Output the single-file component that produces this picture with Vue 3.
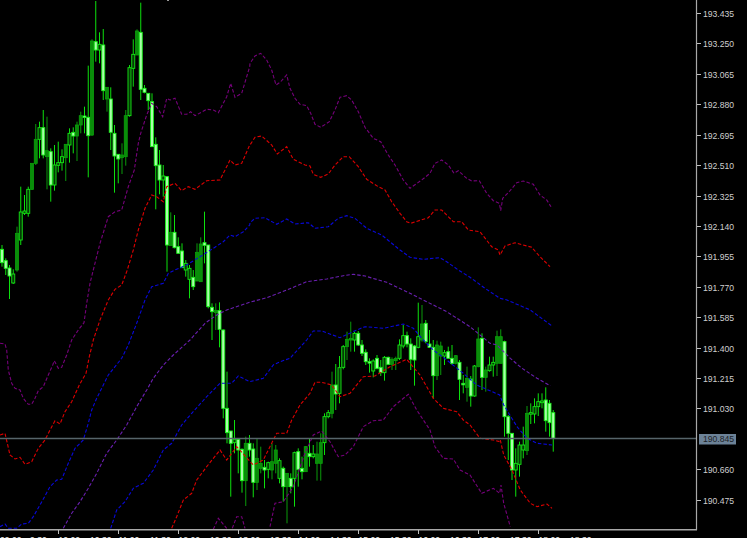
<template>
  <div class="terminal">
    <svg class="chart" width="747" height="538" viewBox="0 0 747 538">
      <!-- candles -->
      <g v-for="c in candles" :key="c.x">
        <line :class="'wick-' + c.t" :x1="c.x" :x2="c.x" :y1="c.wt" :y2="c.wb" />
        <rect :class="'body-' + c.t" :x="c.x - 1.5" :y="c.bt" width="3" :height="c.h" />
      </g>

      <!-- bands -->
      <polyline v-for="l in bands" :key="l.key" class="band" :class="l.name" :points="l.points" />

      <!-- current price line -->
      <line class="price-line" x1="0" x2="697" y1="438.5" y2="438.5" />
      <rect class="top-mark" x="167" y="0" width="2" height="1" />

      <!-- axes -->
      <line class="axis" x1="696.5" x2="696.5" y1="0" y2="530" />
      <line class="axis axis-bottom" x1="0" x2="697" y1="529.8" y2="529.8" />

      <g v-for="p in prices" :key="p.label">
        <line class="axis-tick" x1="697" x2="701" :y1="p.y" :y2="p.y" />
        <text class="axis-text" x="703" :y="p.y + 3.5">{{ p.label }}</text>
      </g>

      <rect class="price-box" x="699" y="434" width="37" height="10.5" />
      <text class="price-box-text" x="703" y="442.3">190.845</text>

      <line v-for="x in timeTicks" :key="x" class="axis-tick" :x1="x" :x2="x" y1="530" y2="534" />
      <text v-for="t in timeLabels" :key="t.x" class="axis-text time" :x="t.x" y="542.6">{{ t.label }}</text>
    </svg>
  </div>
</template>

<script setup>
// t: w = pale body, d = filled dark, h = outlined
// values are read off 3x crops: [type, bodyTop, bodyBottom, wickTop, wickBottom], y = base + v / 3
const blockA = [
  ['w',748,788,735,800],['w',782,805,775,825],['w',804,828,795,897],['h',822,849,808,852],['d',700,810,680,815],
  ['h',636,720,560,735],['h',633,640,585,645],['h',568,640,560,650],['d',490,568,490,570],['d',418,490,372,495],
  ['h',383,418,365,475],['w',383,465,330,475],['d',452,470,350,568],['w',455,555,445,605],['h',495,555,435,572],
  ['h',488,496,425,517],['h',470,488,448,512],['d',433,473,433,543],['h',400,435,385,488],['w',397,408,382,460],
  ['d',375,408,365,483],['d',347,375,335,400],['w',348,352,320,400],['w',352,407,197,532],['d',123,405,118,408],
  ['w',125,150,3,185],['h',133,150,97,190],['w',135,272,87,300],['d',262,297,262,335],['w',297,397,262,450],
  ['w',400,468,375,578],['w',463,477,463,550],['d',465,473,430,522],['d',347,470,330,497],['h',203,347,195,350],
  ['h',163,205,118,260],['d',93,165,88,165],['w',97,268,8,300],['w',265,277,255,280],['w',280,302,280,330],
  ['w',305,440,280,440],['w',433,497,412,628],['w',495,540,450,583],['h',528,540,495,590],['w',530,735,528,815],
  ['d',697,737,637,735],['w',697,743,645,745],['w',740,760,712,760],['w',753,803,730,803],['h',790,810,780,830],
  ['h',805,838,795,895],['w',832,860,810,870],['d',757,843,730,843],['d',732,845,712,845],['w',728,736,635,790],
  ['w',735,920,735,925]
]
const blockB = [
  ['w',112,125,100,210],['d',121,128,100,180],['w',122,178,97,232],['w',180,415,178,445],['w',415,488,305,520],
  ['w',483,520,490,680],['h',508,518,450,550],['w',508,540,505,610],['w',538,632,535,668],['d',520,632,500,708],
  ['w',520,540,495,560]
]
const blockC = [
  ['w',537,637,520,682],['d',565,637,505,660],['d',580,595,530,610],['w',592,600,570,655],['h',578,598,575,625],
  ['d',575,600,520,628],['d',540,580,525,610],['h',572,625,565,640],['w',595,650,590,695],['d',610,650,610,760],
  ['w',625,650,610,670],['h',548,625,545,710],['w',545,598,535,650],['w',595,605,560,628],['d',530,605,528,605],
  ['w',550,560,505,590],['h',552,560,525,565],['d',552,580,515,632],['d',518,580,490,632],['h',440,518,430,555],
  ['h',428,440,420,445],['d',345,430,305,445],['w',345,372,282,420],['h',293,370,258,400],['h',230,292,225,298],
  ['d',208,230,185,270],['d',205,210,155,245],['h',190,210,185,245],['w',190,225,183,228],['w',225,250,210,258],
  ['w',247,275,238,285],['w',275,279,265,308],['h',273,303,268,322],['w',265,295,255,298],['w',292,308,270,318],
  ['h',262,308,258,332],['w',262,283,260,285],['d',268,283,262,300],['d',265,272,260,300],['h',225,265,208,270],
  ['h',197,228,165,235],['w',197,222,185,232],['w',222,268,205,300],['w',228,270,225,347],['h',200,232,98,235],
  ['d',162,210,105,215],['w',160,215,150,220],['w',222,232,180,232],['w',232,317,210,385],['d',225,317,212,330],
  ['d',228,258,215,315],['h',248,258,240,285],['w',245,265,230,265],['w',265,280,225,285],['d',257,280,255,283],
  ['w',277,328,270,390],['w',340,343,315,370],['d',325,352,290,395],['w',327,378,318,410],['h',288,378,285,380],
  ['d',207,290,172,292],['w',205,322,190,360],['d',300,322,290,365],['h',285,302,260,305],['h',277,285,260,320],
  ['d',200,280,182,318]
]
const blockD = [
  ['d',110,190,88,190],['w',125,350,122,410],['w',350,400,345,480],['w',400,510,400,540],['h',490,510,445,590],
  ['h',435,493,425,530],['h',435,450,380,475],['d',340,452,318,465],['h',338,342,310,372],['h',320,342,295,370],
  ['h',305,320,280,348],['h',303,308,280,325],['w',300,362,262,395],['w',310,368,300,410],['w',338,415,330,455]
]

const readBlock = (rows, base) =>
  rows.map(([t, bt, bb, wt, wb]) => ({
    t,
    bt: base + bt / 3,
    h: Math.max((bb - bt) / 3, 1.5),
    wt: base + wt / 3,
    wb: base + wb / 3
  }))

const candles = [
  ...readBlock(blockA, 0),
  ...readBlock(blockB, 270),
  ...readBlock(blockC, 270),
  ...readBlock(blockD, 300)
].map((c, i) => ({ ...c, x: 2 + 3.75 * i }))

// one piece of a band as traced from a crop at (x0, y0)
const seg = (x0, y0, v) => {
  const out = []
  for (let i = 0; i < v.length; i += 2) out.push(`${(x0 + v[i] / 3).toFixed(1)},${(y0 + v[i + 1] / 3).toFixed(1)}`)
  return out.join(' ')
}

const bands = [
  {
    name: 'magenta',
    points: [
      seg(0, 270, [0,220,15,222,20,240,25,300,35,340,45,355,60,360,70,385,85,403,95,403,105,385,115,362,130,350,145,315,158,285,163,272,175,295,185,292,200,255,215,210,235,180,252,158,260,100,270,40,280,0]),
      seg(0, 0, [300,730,325,650,345,635,365,630,385,560,403,510,415,430,422,400,440,345,455,310,470,320,488,350,500,295,510,300,525,295,545,343,560,343,572,335,585,347,620,328,640,330,655,338,680,290,692,250,705,292,725,280,749,200]),
      seg(250, 40, [0,70,15,48,32,40,50,60,65,90,78,135,92,125,110,105,120,145,135,175,150,193,170,197,182,220,195,253,212,262,238,245,255,210,270,172,290,167,305,180,325,215,345,262,370,295,392,305,415,345,435,375,460,420,480,445,515,420,540,400,555,370,575,360,595,375,612,400,625,392,650,415,665,423,688,422,710,460,730,482,748,490,752,512,758,475,775,458,800,428,820,423,850,433,870,465,890,480,903,500])
    ].join(' ')
  },
  {
    name: 'red',
    points: [
      seg(0, 270, [0,495,15,490,22,520,30,555,45,567,60,562,75,583,95,575,115,535,135,510,150,480,165,452,180,462,195,425,215,395,238,345,258,310,268,260,280,210,300,150,325,90,345,58,365,45,382,0]),
      seg(0, 0, [400,750,415,690,435,625,455,585,470,590,490,605,500,560,525,550,545,572,565,560,585,568,620,542,660,540,690,480,705,495,725,490,749,435]),
      seg(250, 40, [0,315,15,292,35,288,65,315,82,342,110,320,130,358,165,375,180,378,190,403,212,412,235,402,255,375,280,350,298,350,325,380,350,418,385,440,405,450,425,485,450,520,470,545,482,550,535,533,555,510,575,510,610,545,635,545,655,570,690,575,725,620,745,630,750,645,765,618,795,608,845,622,870,650,900,680])
    ].join(' ')
  },
  {
    name: 'blue',
    points: [
      seg(0, 270, [0,770,15,762,25,775,50,775,65,762,85,760,100,740,120,705,150,650,170,630,185,628,205,580,225,535,250,510,265,460,275,420,290,385,325,315,345,290,365,265,385,225,410,160,435,90,455,50,490,40,505,10,525,0]),
      seg(0, 0, [560,795,600,770,640,745,670,725,690,705,705,710,730,695,749,675]),
      seg(250, 40, [0,548,15,535,45,533,80,553,110,537,135,552,175,548,195,565,235,560,265,535,290,527,315,535,350,565,395,585,450,630,480,652,520,658,570,653,590,665,625,690,660,712,705,745]),
      seg(250, 270, [750,85]),
      seg(497, 300, [30,0,100,30,165,78])
    ].join(' ')
  },
  {
    name: 'violet',
    points: [
      seg(0, 270, [190,775,215,730,240,695,265,655,290,610,320,550,350,510,380,465,410,410,440,360,460,325,490,285,520,255,570,210,615,160,650,135,680,120,749,97]),
      seg(250, 270, [50,83,110,60,170,35,230,27,280,17,310,13,345,18,410,37,470,65,530,95,590,125,660,170,720,220]),
      seg(497, 300, [0,135,40,175,75,205,120,235,160,257])
    ].join(' ')
  },
  {
    name: 'blue',
    points: [
      seg(0, 270, [332,775,350,720,375,695,400,655,430,640,460,600,490,540,515,520,545,465,575,430,620,380,660,340,695,340,715,318,749,335]),
      seg(250, 270, [40,325,70,285,90,275,120,265,170,210,190,183,215,183,270,203,320,180,345,170,400,175,460,162,490,175,520,210,550,240,590,270,640,310,680,345,749,375]),
      seg(497, 300, [20,315,60,380,90,415,120,430,165,435])
    ].join(' '),
  },
  {
    name: 'red',
    points: [
      seg(0, 270, [515,775,530,740,550,690,575,670,590,630,620,590,660,540,680,570,710,530]),
      seg(250, 270, [10,585,40,570,70,510,80,490,110,490,125,450,150,405,180,370,195,337,215,337,245,345,270,380,300,370,340,320,375,318,420,290,470,268,510,315,550,385,580,415,620,425,640,450,660,465,690,505,730,510,749,515]),
      seg(497, 300, [10,420,20,465,45,510,70,570,100,610,120,620,150,612,165,625])
    ].join(' ')
  },
  { name: 'magenta', points: seg(0, 500, [640,88,655,55,680,85]) },
  { name: 'magenta', points: seg(0, 500, [697,85,710,50,725,50,735,85]) },
  {
    name: 'magenta',
    points: [
      seg(250, 270, [60,770,75,700,100,695,130,650,165,550,190,495,215,483,240,515,265,560,285,555,310,530,340,470,370,452,400,450,430,410,475,373,500,420,540,480,555,530,580,565,610,567,630,600,660,615,695,670,730,655,749,670]),
      seg(497, 300, [12,555,20,610,40,680])
    ].join(' ')
  }
].map((l, i) => ({ ...l, key: i }))

const prices = []
for (let i = 0; i < 17; i++) {
  if (i === 14) continue
  prices.push({ y: Math.round(13 + 30.42 * i) + 0.5, label: (193.435 - 0.185 * i).toFixed(3) })
}

const timeTicks = []
const timeLabels = []
for (let i = 0; i < 9; i++) {
  const x = 58.5 + 60 * i
  timeTicks.push(x)
  timeLabels.push({ x, label: `${10 + i}:00` })
}
for (let i = -1; i < 9; i++) {
  timeLabels.push({ x: 90 + 60 * i, label: `${10 + i}:30` })
}
timeLabels.push({ x: 0, label: '09:00' })
</script>

<style>
html,
body {
  background: #000;
}
</style>

<style scoped>
.terminal {
  width: 747px;
  height: 538px;
  background: #000;
  overflow: hidden;
}
.chart {
  display: block;
}
.wick-w,
.wick-h {
  stroke: #0de00d;
  stroke-width: 1;
}
.wick-d {
  stroke: #0a9a0a;
  stroke-width: 1;
}
.body-w {
  fill: #a8ffa8;
  stroke: #18f018;
  stroke-width: 0.9;
}
.body-d {
  fill: #0a8c0a;
  stroke: #0aa00a;
  stroke-width: 0.8;
}
.body-h {
  fill: #043a04;
  stroke: #14e614;
  stroke-width: 0.9;
}
.band {
  fill: none;
  stroke-width: 1.1;
  stroke-dasharray: 3.5 2;
}
.magenta {
  stroke: #75007a;
}
.red {
  stroke: #dc0000;
}
.blue {
  stroke: #0808d8;
}
.violet {
  stroke: #6a1fb0;
}
.price-line {
  stroke: #56646a;
  stroke-width: 1.4;
}
.top-mark {
  fill: #999;
}
.axis {
  stroke: #a8a8a8;
  stroke-width: 1.2;
}
.axis-bottom {
  stroke-width: 1.5;
}
.axis-tick {
  stroke: #c0c0c0;
  stroke-width: 1;
}
.axis-text {
  font-family: "Liberation Sans", Arial, sans-serif;
  font-size: 8.6px;
  fill: #cfcfcf;
}
.time {
  fill: #eee;
}
.price-box {
  fill: #6c8297;
}
.price-box-text {
  font-family: "Liberation Sans", Arial, sans-serif;
  font-size: 8.6px;
  fill: #1d2328;
}
</style>
